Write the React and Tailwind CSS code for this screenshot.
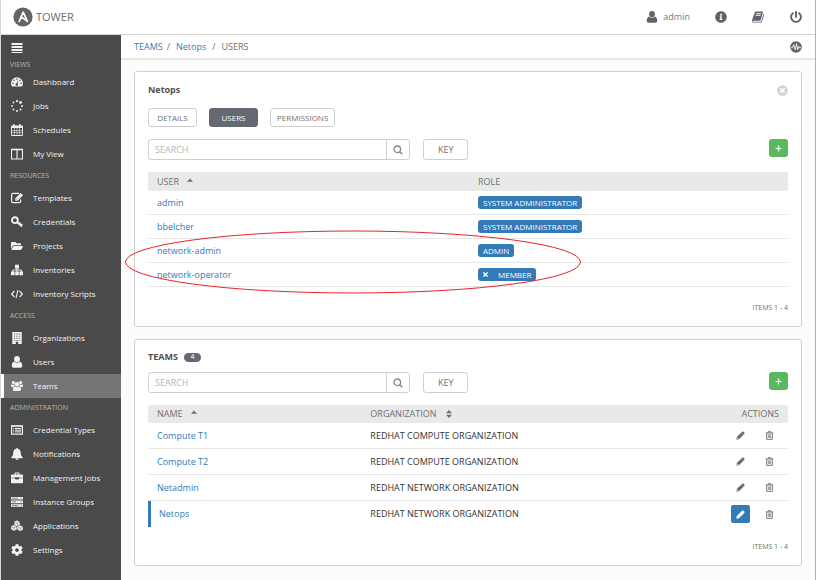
import React from "react";
import {
  FaCog,
  FaFolderOpen,
  FaInfoCircle,
  FaPowerOff,
  FaTimes,
  FaTimesCircle,
} from "react-icons/fa";

const AnsibleLogo = () => (
  <svg viewBox="0 0 20 20" className="h-5 w-5" aria-hidden="true">
    <circle cx="10" cy="10" r="9.6" fill="#646464" />
    <path
      d="M6.200 14.400 10.200 5.200l4.200 9.200-6.300-4.800"
      fill="none"
      stroke="#fff"
      strokeWidth="1.700"
      strokeLinejoin="round"
      strokeLinecap="round"
    />
  </svg>
);

const BookIcon = ({ className }) => (
  <svg viewBox="0 0 1792 1792" fill="currentColor" className={className}>
    <path d="M1639 478q40 57 18 129l-275 906q-19 64-76.500 107.5t-122.500 43.500h-923q-77 0-148.500-53.500t-99.500-131.500q-24-67-2-127 0-4 3-27t4-37q1-8-3-21.500t-3-19.500q2-11 8-21t16.500-23.500 16.500-23.500q23-38 45-91.500t30-91.500q3-10 .5-30t-.5-28q3-11 17-28t17-23q21-36 42-92t25-90q1-9-2.500-32t.5-28q4-13 22-30.500t22-22.500q19-26 42.500-84.500t27.500-96.500q1-8-3-25.500t-2-26.500q2-8 9-18t18-23 17-21q8-12 16.500-30.500t15-35 16-36 19.500-32 26.500-23.500 36-11.500 47.500 5.500l-1 3q38-9 51-9h761q74 0 114 56t18 130l-274 906q-36 119-71.500 153.500t-128.500 34.500h-869q-27 0-38 15-11 16-1 43 24 70 144 70h923q29 0 56-15.500t35-41.500l300-987q7-22 5-57 38 15 59 43zm-1064 2q-4 13 2 22.500t20 9.500h608q13 0 25.500-9.500t16.500-22.500l21-64q4-13-2-22.500t-20-9.500h-608q-13 0-25.500 9.500t-16.500 22.500zm-83 256q-4 13 2 22.500t20 9.500h608q13 0 25.500-9.500t16.500-22.500l21-64q4-13-2-22.500t-20-9.500h-608q-13 0-25.500 9.500t-16.500 22.500z" />
  </svg>
);

const MenuIcon = ({ className }) => (
  <svg viewBox="0 0 12 12" fill="currentColor" className={className}>
    <path d="M.5 1h11v2H.5zM.5 4h11v2H.5zM.5 7h11v2H.5zM.5 10h11v1H.5z" />
  </svg>
);

const DashboardIcon = ({ className }) => (
  <svg viewBox="0 0 12 12" className={className}>
    <path d="M6 1.200a6 6 0 0 0-6 6c0 1.200.3 2.200.9 3.100.1.200.3.300.5.300h9.200c.2 0 .4-.1.500-.3.600-.9.900-1.900.9-3.100a6 6 0 0 0-6-6z" fill="currentColor" />
    <g fill="#4a4a4a">
      <circle cx="1.900" cy="7.300" r=".8" />
      <circle cx="3.100" cy="4.300" r=".8" />
      <circle cx="6" cy="3" r=".8" />
      <circle cx="8.900" cy="4.300" r=".8" />
      <circle cx="10.100" cy="7.300" r=".8" />
      <circle cx="5.800" cy="8.500" r="1.200" />
    </g>
    <path d="M6 8.200 6.900 4.800" stroke="#4a4a4a" strokeWidth=".8" />
  </svg>
);

const UserIcon = ({ className }) => (
  <svg viewBox="0 0 12 12" fill="currentColor" className={className}>
    <ellipse cx="6" cy="3.200" rx="2.900" ry="3.100" />
    <path d="M3.200 5.400C1.500 5.700.8 7.300.8 10c0 1.100.6 1.700 1.600 1.700h7.200c1 0 1.600-.6 1.600-1.700 0-2.700-.7-4.300-2.400-4.600C8 6.500 7 6.700 6 6.700s-2-.2-2.800-1.300z" />
  </svg>
);

const UsersIcon = ({ className }) => (
  <svg viewBox="0 0 14 12" fill="currentColor" className={className}>
    <circle cx="2.800" cy="2" r="1.900" />
    <circle cx="11.200" cy="2" r="1.900" />
    <circle cx="7" cy="4" r="2.600" />
    <path d="M1 3.900C.3 4.200 0 5 0 6.200c0 .6.400.9 1 .9h2c.3-.4.700-.7 1.200-.8-.3-.6-.5-1.200-.5-2-.9.500-1.900.2-2.700-.4zM13 3.900c.7.300 1 1.100 1 2.300 0 .6-.4.900-1 .9h-2c-.3-.4-.7-.7-1.200-.8.3-.6.5-1.200.5-2 .9.500 1.900.2 2.700-.4z" />
    <path d="M4.600 6.600C3 6.800 2.300 8 2.300 10.200c0 1.100.7 1.700 1.700 1.700h6c1 0 1.700-.6 1.700-1.700 0-2.200-.7-3.400-2.300-3.600-1.500 1-3.300 1-4.800 0z" />
  </svg>
);

const JobsIcon = ({ className }) => (
  <svg viewBox="0 0 12 12" fill="currentColor" className={className}>
    <circle cx="6" cy="1.100" r="1.100" />
    <circle cx="9.500" cy="2.500" r="1.400" />
    <circle cx="11" cy="6" r="1" />
    <circle cx="9.500" cy="9.500" r="1" />
    <circle cx="6" cy="11" r="1" />
    <circle cx="2.500" cy="9.500" r=".9" />
    <circle cx="1" cy="6" r=".9" />
    <circle cx="2.500" cy="2.500" r=".9" />
  </svg>
);

const CalendarIcon = ({ className }) => (
  <svg viewBox="0 0 12 12" fill="currentColor" className={className}>
    <path
      fillRule="evenodd"
      d="M2.300 0h1.400v1.400h4.600V0h1.400v1.400h1.400c.5 0 .8.300.8.800v9c0 .5-.3.800-.8.800H.9c-.5 0-.8-.3-.8-.8v-9c0-.5.300-.8.800-.8h1.400zM1 4v2h2V4zm2.600 0v2h2.100V4zm2.700 0v2h2.100V4zM9 4v2h2V4zM1 6.500v2h2v-2zm2.600 0v2h2.100v-2zm2.700 0v2h2.100v-2zM9 6.500v2h2v-2zM1 9v2.100h2V9zm2.600 0v2.100h2.100V9zm2.700 0v2.100h2.100V9zM9 9v2.100h2V9z"
    />
  </svg>
);

const ColumnsIcon = ({ className }) => (
  <svg viewBox="0 0 12 12" fill="none" stroke="currentColor" className={className}>
    <path d="M.5 1.500h11v9.500H.5zM6 1.500V11" strokeWidth="1.100" />
    <path d="M0 1.500h12" strokeWidth="1.600" />
  </svg>
);

const EditIcon = ({ className }) => (
  <svg viewBox="0 0 12 12" className={className}>
    <path
      d="M8 1.400H2C1.100 1.400.6 1.900.6 2.800v6.400c0 .9.500 1.400 1.400 1.400h6.300c.9 0 1.400-.5 1.400-1.400V7.500"
      fill="none"
      stroke="currentColor"
      strokeWidth="1.200"
    />
    <path d="M4.300 8.700V6.300L9.700.9 12 3.200 6.700 8.700z" fill="currentColor" />
    <path d="M5.200 6.800 6.300 7.900" stroke="#4a4a4a" strokeWidth=".7" />
  </svg>
);

const KeyIcon = ({ className }) => (
  <svg viewBox="0 0 12 12" fill="none" stroke="currentColor" className={className}>
    <circle cx="3.900" cy="4.200" r="2.900" strokeWidth="1.900" />
    <path d="M6 6 11 10.600M8 8.200l1.400-1.800M9.800 9.900l1.400-1.800" strokeWidth="1.700" />
  </svg>
);

const SitemapIcon = ({ className }) => (
  <svg viewBox="0 0 12 12" className={className}>
    <path d="M4 .8h4v3.600H4zM0 7.600h3.600v3.600H0zM4.200 7.600h3.600v3.600H4.200zM8.400 7.600H12v3.600H8.400z" fill="currentColor" />
    <path d="M6 4v4M1.800 8V6h8.400v2" fill="none" stroke="currentColor" strokeWidth="1" />
  </svg>
);

const CodeIcon = ({ className }) => (
  <svg viewBox="0 0 12 12" fill="none" stroke="currentColor" className={className}>
    <path d="M3.400 3 .6 6l2.800 3M8.600 3l2.800 3-2.800 3M7 1.800 5 10.200" strokeWidth="1.100" />
  </svg>
);

const BuildingIcon = ({ className }) => (
  <svg viewBox="0 0 12 12" className={className}>
    <path d="M1.300 0h9.400v12H1.300z" fill="currentColor" />
    <path d="M3 2h6.500M3 4.200h6.500M3 6.400h6.500M3 8.600h6.500" stroke="#4a4a4a" strokeWidth=".8" strokeDasharray="1 .75" />
    <path d="M4.800 9.800h2.400V12H4.800z" fill="#4a4a4a" />
  </svg>
);

const CardIcon = ({ className }) => (
  <svg viewBox="0 0 12 12" className={className}>
    <path d="M.6 1.800h10.800v8.400H.6z" fill="none" stroke="currentColor" strokeWidth="1.200" />
    <path d="M.6 2.200h10.800M2.200 4.500h1M4 4.500h6M2.200 6.200h1M4 6.200h6M2.200 7.900h1M4 7.900h6" stroke="currentColor" strokeWidth="1" />
  </svg>
);

const BellIcon = ({ className }) => (
  <svg viewBox="0 0 12 12" fill="currentColor" className={className}>
    <path d="M6 0c.5 0 .8.300.8.800 1.800.4 2.900 1.800 2.900 3.700 0 2.400.8 3.800 2.100 4.800 0 .5-.4.900-.9.900H1.100c-.5 0-.9-.4-.9-.9 1.300-1 2.100-2.400 2.100-4.800 0-1.900 1.100-3.300 2.900-3.700C5.200.3 5.500 0 6 0zM4.400 10.600h3.200c0 .8-.7 1.400-1.600 1.400s-1.600-.6-1.600-1.400z" />
  </svg>
);

const BriefcaseIcon = ({ className }) => (
  <svg viewBox="0 0 12 12" fill="currentColor" className={className}>
    <path d="M3.500 2.500V1.200c0-.5.300-.8.800-.8h3.400c.5 0 .8.300.8.800v1.300H11c.6 0 1 .4 1 1v2.300H8.500v-.6h-5v.6H0V3.500c0-.6.400-1 1-1zm1-1.100v1.100h3V1.400z" />
    <path d="M0 6.300h3.700l1.100 1.200h2.400l1.100-1.200H12v3.900c0 .6-.4 1-1 1H1c-.6 0-1-.4-1-1z" />
  </svg>
);

const ServerIcon = ({ className }) => (
  <svg viewBox="0 0 12 12" className={className}>
    <path d="M0 1h12v2.600H0zM0 4.600h12v2.600H0zM0 8.200h12v2.600H0z" fill="currentColor" />
    <path d="M1 2.300h6M1 5.900h4M1 9.500h6M9.800 2.300h1M9.800 5.900h1M9.800 9.500h1" stroke="#4a4a4a" strokeWidth=".6" />
  </svg>
);

const CubesIcon = ({ className }) => (
  <svg viewBox="0 0 14 12" className={className}>
    <path
      d="M4.300 1 7 0l2.600 1.300.4 3-2.700 1.400-2.700-1zM.6 6.500l2.600-1.200L6 6.500l.3 3.200-2.800 1.500L.7 9.800zM7.800 7l2.700-1.300L13.300 7l.4 2.900-2.700 1.600L8 10.200z"
      fill="currentColor"
      stroke="currentColor"
      strokeWidth=".8"
      strokeLinejoin="round"
    />
    <path
      d="m4.800 1.800 2.500 1 2.300-1.200M7.300 2.800v2.400M1 7.200l2.400 1L5.700 7M3.400 8.200v2.400M8.300 7.700l2.500 1 2.300-1.200M10.800 8.700v2.400"
      fill="none"
      stroke="#4a4a4a"
      strokeWidth=".5"
    />
  </svg>
);

const SearchIcon = ({ className }) => (
  <svg viewBox="0 0 10 10" fill="none" stroke="currentColor" className={className}>
    <circle cx="4.300" cy="4.300" r="3.300" strokeWidth="1.300" />
    <path d="m6.700 6.700 2.600 2.600" strokeWidth="1.500" />
  </svg>
);

const PlusIcon = ({ className }) => (
  <svg viewBox="0 0 7 7" stroke="currentColor" className={className}>
    <path d="M3.500.5v6M.5 3.500h6" strokeWidth="1.200" />
  </svg>
);

const PencilIcon = ({ className }) => (
  <svg viewBox="0 0 10 10" className={className}>
    <path d="M.4 9.600.9 6.800 6.900.9c.5-.5 1-.5 1.500 0l.8.8c.5.500.5 1 0 1.500l-6 5.900z" fill="currentColor" />
    <path d="m6.100 2.100 1.900 1.900" stroke="#fff" strokeWidth=".4" />
    <circle cx="1.800" cy="8.200" r=".6" fill="#fff" />
  </svg>
);

const TrashIcon = ({ className }) => (
  <svg viewBox="0 0 10 10" fill="none" stroke="currentColor" className={className}>
    <path d="M.8 2.200h8.400M3.400 2V.8h3.200V2M1.900 2.400v6.900h6.200V2.400" strokeWidth="1" />
    <path d="M3.800 3.800v4M5 3.800v4M6.200 3.800v4" strokeWidth=".7" />
  </svg>
);

const SortUpIcon = () => (
  <svg viewBox="0 0 6 6" fill="currentColor" className="mb-1 h-1.5 w-1.5">
    <path d="M3 1.500 6 4.700H0z" />
  </svg>
);

const SortIcon = () => (
  <svg viewBox="0 0 6 8" fill="currentColor" className="h-2 w-1.5">
    <path d="M3 0 6 3.300H0zM3 8 0 4.700h6z" />
  </svg>
);

const ActivityIcon = ({ className }) => (
  <svg viewBox="0 0 12 12" className={className}>
    <circle cx="6" cy="6" r="5.800" fill="currentColor" />
    <path
      d="M1 6.800h1.300L3.700 3.600l1.500 5.200L6.500 2.600l1.300 6L9 5.400l.8 1.400H11"
      fill="none"
      stroke="#fff"
      strokeWidth=".9"
    />
  </svg>
);

const sections = [
  {
    label: "VIEWS",
    items: [
      { name: "Dashboard", icon: DashboardIcon },
      { name: "Jobs", icon: JobsIcon },
      { name: "Schedules", icon: CalendarIcon },
      { name: "My View", icon: ColumnsIcon },
    ],
  },
  {
    label: "RESOURCES",
    items: [
      { name: "Templates", icon: EditIcon },
      { name: "Credentials", icon: KeyIcon },
      { name: "Projects", icon: FaFolderOpen },
      { name: "Inventories", icon: SitemapIcon },
      { name: "Inventory Scripts", icon: CodeIcon },
    ],
  },
  {
    label: "ACCESS",
    items: [
      { name: "Organizations", icon: BuildingIcon },
      { name: "Users", icon: UserIcon },
      { name: "Teams", icon: UsersIcon, active: true },
    ],
  },
  {
    label: "ADMINISTRATION",
    items: [
      { name: "Credential Types", icon: CardIcon },
      { name: "Notifications", icon: BellIcon },
      { name: "Management Jobs", icon: BriefcaseIcon },
      { name: "Instance Groups", icon: ServerIcon },
      { name: "Applications", icon: CubesIcon },
      { name: "Settings", icon: FaCog },
    ],
  },
];

const users = [
  { name: "admin", role: "SYSTEM ADMINISTRATOR" },
  { name: "bbelcher", role: "SYSTEM ADMINISTRATOR" },
  { name: "network-admin", role: "ADMIN" },
  { name: "network-operator", role: "MEMBER", removable: true },
];

const teams = [
  { name: "Compute T1", organization: "REDHAT COMPUTE ORGANIZATION" },
  { name: "Compute T2", organization: "REDHAT COMPUTE ORGANIZATION" },
  { name: "Netadmin", organization: "REDHAT NETWORK ORGANIZATION" },
  { name: "Netops", organization: "REDHAT NETWORK ORGANIZATION", selected: true },
];

const Header = () => (
  <header className="flex h-[35px] items-center justify-between border-b border-[#d2d2d2] bg-white pr-[13px] pl-3 text-[#5f636b]">
    <a href="#home" className="flex items-center gap-[3px] text-[11px] text-[#6b6b6b]">
      <AnsibleLogo />
      TOWER
    </a>
    <div className="flex items-center gap-[25px]">
      <a href="#profile" className="flex items-center gap-[5px] text-[9px] text-[#777]">
        <UserIcon className="h-3 w-3 text-[#5f636b]" />
        admin
      </a>
      <button aria-label="About">
        <FaInfoCircle className="h-3 w-3" />
      </button>
      <button aria-label="Documentation">
        <BookIcon className="h-[14px] w-[13px]" />
      </button>
      <button aria-label="Log out">
        <FaPowerOff className="h-3 w-3" />
      </button>
    </div>
  </header>
);

const Sidebar = () => (
  <nav className="w-[120px] shrink-0 bg-[#4a4a4a] text-[8px] text-[#f2f2f2]">
    <button aria-label="Toggle menu" className="flex h-[25px] w-full items-center pl-[10px]">
      <MenuIcon className="h-3 w-3" />
    </button>
    {sections.map((section, index) => (
      <div key={section.label}>
        <h2
          className={`flex items-center pl-[9px] text-[7px] text-[#b7b7b7] ${
            index === 0 ? "h-[10px]" : "h-5"
          }`}
        >
          {section.label}
        </h2>
        <ul>
          {section.items.map(({ name, icon: Icon, active }) => (
            <li key={name}>
              <a
                href={`#${name}`}
                className={`flex h-6 items-center gap-[10px] border-l-3 pl-[7px] ${
                  active ? "border-white bg-[#757575]" : "border-transparent"
                }`}
              >
                <Icon className="h-3 w-3 shrink-0" />
                {name}
              </a>
            </li>
          ))}
        </ul>
      </div>
    ))}
  </nav>
);

const Breadcrumb = () => (
  <div className="flex h-[25px] items-center justify-between border-b-2 border-[#e6e6e6] bg-white px-[13px] text-[9px] text-[#707070]">
    <div className="flex items-center">
      <a href="#teams" className="text-[#337ab7]">TEAMS</a>
      <span className="mr-1.5 ml-1">/</span>
      <a href="#netops" className="text-[#337ab7]">Netops</a>
      <span className="mx-1.5">/</span>
      <span>USERS</span>
    </div>
    <button aria-label="Activity stream" className="text-[#5f636b]">
      <ActivityIcon className="h-3 w-3" />
    </button>
  </div>
);

const SearchBar = ({ label }) => (
  <div className="flex items-start">
    <form className="flex h-[21px] w-[41%] overflow-hidden rounded-[3px] border border-[#cfcfcf]">
      <input
        type="text"
        aria-label={label}
        placeholder="SEARCH"
        className="min-w-0 flex-1 px-1.5 text-[9px] outline-none placeholder:text-[#b7b7b7]"
      />
      <button
        type="button"
        aria-label="Search"
        className="flex w-[23px] items-center justify-center border-l border-[#cfcfcf] text-[#848992]"
      >
        <SearchIcon className="h-[10px] w-[10px]" />
      </button>
    </form>
    <button className="ml-[13px] h-[21px] w-[45px] rounded-[3px] border border-[#cfcfcf] text-[9px] text-[#707070]">
      KEY
    </button>
    <button
      aria-label="Add"
      className="ml-auto flex h-[18px] w-[19px] items-center justify-center rounded-[3px] bg-[#5cb85c] text-white"
    >
      <PlusIcon className="h-[7px] w-[7px]" />
    </button>
  </div>
);

const tabClass = "h-[19px] min-w-[49px] rounded-[3px] border px-1.5 text-[8px]";

const UsersPanel = () => (
  <section className="rounded-[3px] border border-[#cfcfcf] bg-white px-[13px] py-3">
    <div className="flex h-3 items-center justify-between">
      <h1 className="text-[9px] font-bold text-[#505050]">Netops</h1>
      <button aria-label="Close" className="text-[#d2d2d2]">
        <FaTimesCircle className="h-[11px] w-[11px]" />
      </button>
    </div>
    <div className="my-3 flex gap-3">
      <button className={`${tabClass} border-[#cfcfcf] text-[#707070]`}>DETAILS</button>
      <button className={`${tabClass} border-[#646972] bg-[#646972] text-white`}>USERS</button>
      <button className={`${tabClass} border-[#cfcfcf] text-[#707070]`}>PERMISSIONS</button>
    </div>
    <SearchBar label="Search users" />
    <table className="mt-3 w-full table-fixed border-separate border-spacing-0 text-left text-[9px]">
      <thead className="text-[#707070]">
        <tr className="h-[19px]">
          <th className="w-[330px] rounded-l-[2px] bg-[#e9e9e9] px-[9px] font-normal">
            <span className="flex items-center gap-2">
              USER
              <SortUpIcon />
            </span>
          </th>
          <th className="rounded-r-[2px] bg-[#e9e9e9] font-normal">ROLE</th>
        </tr>
      </thead>
      <tbody>
        {users.map((user) => (
          <tr key={user.name} className="h-6">
            <td className="border-b border-[#e6e6e6] px-[9px]">
              <a href={`#${user.name}`} className="text-[#337ab7]">{user.name}</a>
            </td>
            <td className="border-b border-[#e6e6e6]">
              <span className="flex h-[13px] w-fit items-center rounded-[3px] bg-[#337ab7] px-[5px] text-[8px] text-white">
                {user.removable && (
                  <button aria-label={`Remove ${user.name}`} className="mr-[9px] -ml-px">
                    <FaTimes className="h-[7px] w-[7px]" />
                  </button>
                )}
                {user.role}
              </span>
            </td>
          </tr>
        ))}
      </tbody>
    </table>
    <p className="mt-[15px] text-right text-[7px] leading-3 text-[#707070]">ITEMS 1 - 4</p>
  </section>
);

const TeamsPanel = () => (
  <section className="mt-3 rounded-[3px] border border-[#cfcfcf] bg-white px-[13px] py-3">
    <div className="mb-[10px] flex h-[10px] items-center gap-1.5">
      <h2 className="text-[9px] font-bold text-[#505050]">TEAMS</h2>
      <span className="flex h-[9px] w-[17px] items-center justify-center rounded-full bg-[#646972] text-[7px] text-white">
        4
      </span>
    </div>
    <SearchBar label="Search teams" />
    <table className="mt-3 w-full table-fixed border-separate border-spacing-0 text-left text-[9px]">
      <thead className="text-[#707070]">
        <tr className="h-[18px]">
          <th className="w-1/3 rounded-l-[2px] bg-[#e9e9e9] px-[9px] font-normal">
            <span className="flex items-center gap-2">
              NAME
              <SortUpIcon />
            </span>
          </th>
          <th className="bg-[#e9e9e9] px-[9px] font-normal">
            <span className="flex items-center gap-[9px]">
              ORGANIZATION
              <SortIcon />
            </span>
          </th>
          <th className="w-1/4 rounded-r-[2px] bg-[#e9e9e9] px-[9px] text-right font-normal">
            ACTIONS
          </th>
        </tr>
      </thead>
      <tbody className="[&>tr:not(:last-child)>td]:border-b">
        {teams.map((team) => (
          <tr key={team.name} className="h-[26px]">
            <td
              className={`border-b-[#e6e6e6] ${
                team.selected ? "border-l-3 border-l-[#337ab7] pl-2" : "pl-[9px]"
              }`}
            >
              <a href={`#${team.name}`} className="text-[#337ab7]">{team.name}</a>
            </td>
            <td className="border-b-[#e6e6e6] px-[9px] text-[#333]">{team.organization}</td>
            <td className="border-b-[#e6e6e6] px-[9px]">
              <div className="flex justify-end gap-[10px] text-[#646972]">
                <button
                  aria-label={`Edit ${team.name}`}
                  className={`flex h-[18px] w-[19px] items-center justify-center rounded-[2px] ${
                    team.selected ? "bg-[#337ab7] text-white" : ""
                  }`}
                >
                  <PencilIcon className="h-[9px] w-[9px]" />
                </button>
                <button
                  aria-label={`Delete ${team.name}`}
                  className="flex h-[18px] w-[19px] items-center justify-center"
                >
                  <TrashIcon className="h-[9px] w-[9px]" />
                </button>
              </div>
            </td>
          </tr>
        ))}
      </tbody>
    </table>
    <p className="mt-[14px] text-right text-[7px] leading-3 text-[#707070]">ITEMS 1 - 4</p>
  </section>
);

const App = () => {
  return (
    <div className="relative flex min-h-screen flex-col border-r border-l border-r-[#b0b0b0] border-l-[#d6d6d6] bg-[#fcfcfc] font-['Open_Sans',sans-serif]">
      <Header />
      <div className="flex flex-1">
        <Sidebar />
        <main className="min-w-0 flex-1">
          <Breadcrumb />
          <div className="px-[13px] pt-[11px] pb-3">
            <UsersPanel />
            <TeamsPanel />
          </div>
        </main>
      </div>
      {/* hand-drawn callout over the two network users */}
      <svg
        viewBox="0 0 458 64"
        className="pointer-events-none absolute top-[230px] left-[123px] h-16 w-[458px]"
        aria-hidden="true"
      >
        <ellipse cx="229" cy="32" rx="227.500" ry="31" fill="none" stroke="#e8252b" />
      </svg>
    </div>
  );
};

export default App;
